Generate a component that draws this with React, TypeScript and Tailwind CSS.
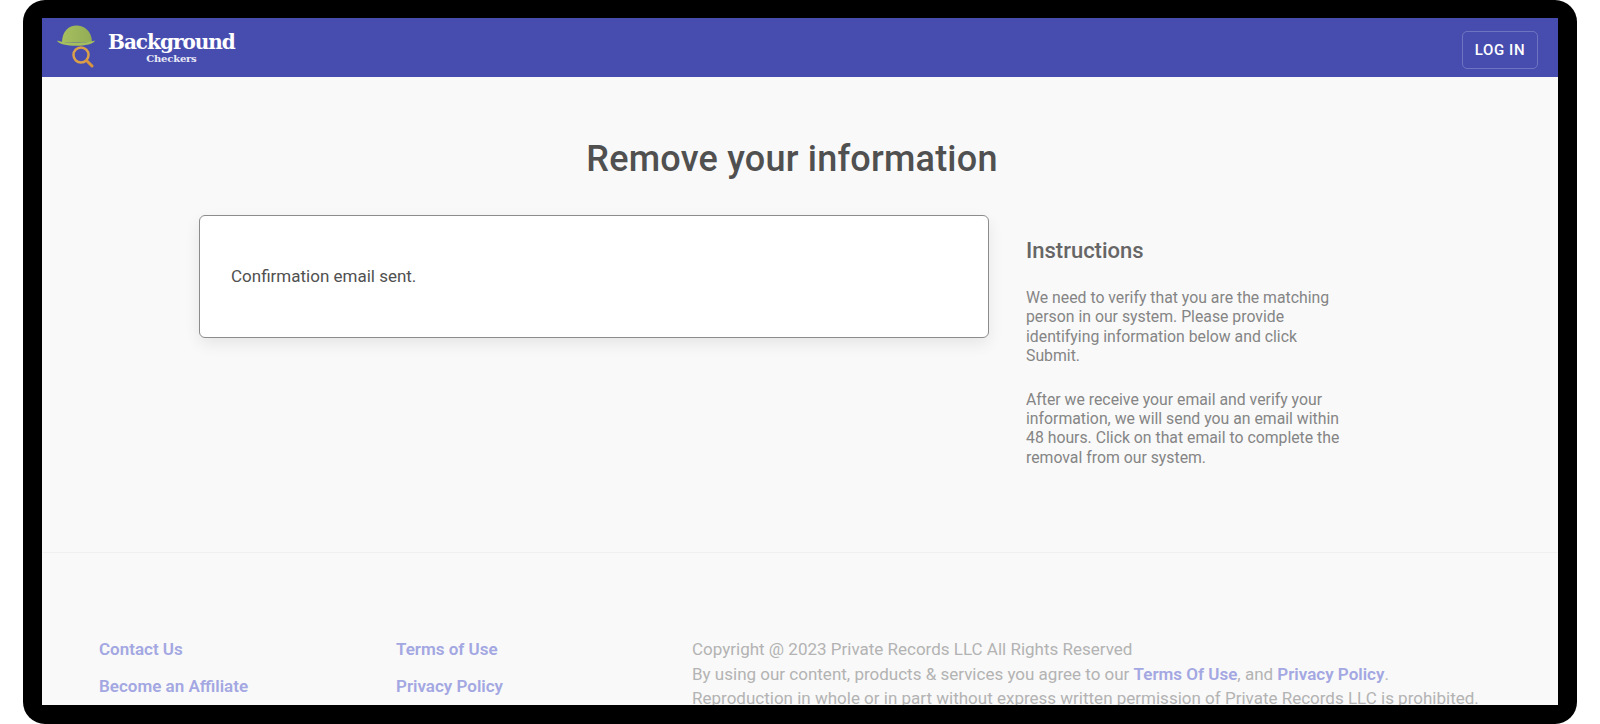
import React from 'react';

const Logo = () => (
  <svg width="38" height="43" viewBox="0 0 38 43" className="shrink-0 -mt-[2px]">
    <defs>
      <linearGradient id="hat" x1="0" y1="0" x2="1" y2="0">
        <stop offset="0" stopColor="#a6bf5e" />
        <stop offset="1" stopColor="#93ad57" />
      </linearGradient>
    </defs>
    <path d="M5 17.5 C5 6 12 0.5 19.5 0.5 C27 0.5 35 6 35 17.5 Z" fill="url(#hat)" />
    <path d="M0 15.5 C8 18.5 30 18.5 38 15.5 C36 22.5 2 22.5 0 15.5 Z" fill="#a6bf5e" />
    <circle cx="24" cy="30" r="7.5" fill="none" stroke="#dba14a" strokeWidth="2.5" />
    <path d="M29.5 35.5 L35 41" stroke="#d8963e" strokeWidth="3" strokeLinecap="round" />
  </svg>
);

const Header = () => (
  <header className="h-[59px] shrink-0 bg-[#474daf] flex items-center justify-between pl-[15px] pr-[20px]">
    <div className="flex items-center gap-[13px]">
      <Logo />
      <div className="flex flex-col items-center -mt-[1px] text-white font-['DejaVu_Serif',serif] font-bold">
        <span className="text-[20px] leading-[22px] tracking-[-1px]">Background</span>
        <span className="text-[10px] leading-[11px] tracking-[-0.2px] text-[#e8e9f6]">Checkers</span>
      </div>
    </div>
    <button className="w-[76px] h-[38px] mt-[5px] rounded-[5px] border border-[#6f74c2] text-white text-[15px] font-medium tracking-[0.6px]">
      LOG IN
    </button>
  </header>
);

const Main = () => (
  <main className="h-[476px] shrink-0 border-b border-[#f0f0f0]">
    <h1 className="pt-[58px] pr-[16px] text-center text-[36px] leading-[48px] font-medium tracking-[0.22px] text-[#505050]">
      Remove your information
    </h1>
    <div className="flex mt-[32px] pl-[157px]">
      <div className="w-[790px] h-[123px] shrink-0 bg-white border border-[#8c8c8c] rounded-[6px] shadow-[0_6px_16px_rgba(0,0,0,0.08)] flex items-center pl-[31px]">
        <p className="text-[17px] text-[#505050]">Confirmation email sent.</p>
      </div>
      <div className="w-[320px] ml-[37px] pt-[23px] text-[#858585]">
        <h2 className="text-[22px] leading-[26px] font-medium text-[#666666]">Instructions</h2>
        <p className="mt-[24px] text-[15.8px] leading-[19.4px]">
          We need to verify that you are the matching person in our system. Please provide identifying information below and click Submit.
        </p>
        <p className="mt-[24px] text-[15.8px] leading-[19.4px]">
          After we receive your email and verify your information, we will send you an email within 48 hours. Click on that email to complete the removal from our system.
        </p>
      </div>
    </div>
  </main>
);

const FooterLink = ({ children }: { children: React.ReactNode }) => (
  <a className="font-semibold text-[#a3a7e2]">{children}</a>
);

const Footer = () => (
  <footer className="flex pt-[84px] pl-[57px] text-[17px] leading-[24.5px]">
    <div className="w-[297px] shrink-0 flex flex-col gap-[12.5px]">
      <FooterLink>Contact Us</FooterLink>
      <FooterLink>Become an Affiliate</FooterLink>
    </div>
    <div className="w-[296px] shrink-0 flex flex-col gap-[12.5px]">
      <FooterLink>Terms of Use</FooterLink>
      <FooterLink>Privacy Policy</FooterLink>
    </div>
    <div className="text-[#b3b3b3] whitespace-nowrap">
      <p>Copyright @ 2023 Private Records LLC All Rights Reserved</p>
      <p>
        By using our content, products &amp; services you agree to our <FooterLink>Terms Of Use</FooterLink>, and <FooterLink>Privacy Policy</FooterLink>.
      </p>
      <p>Reproduction in whole or in part without express written permission of Private Records LLC is prohibited.</p>
    </div>
  </footer>
);

export default function App() {
  return (
    <div className="h-[724px] bg-white px-[23px] font-['Roboto',sans-serif]">
      <div className="h-full bg-black rounded-[22px] pt-[18px] pb-[19px] px-[19px]">
        <div className="h-full bg-[#f9f9f9] overflow-hidden flex flex-col">
          <Header />
          <Main />
          <Footer />
        </div>
      </div>
    </div>
  );
}
